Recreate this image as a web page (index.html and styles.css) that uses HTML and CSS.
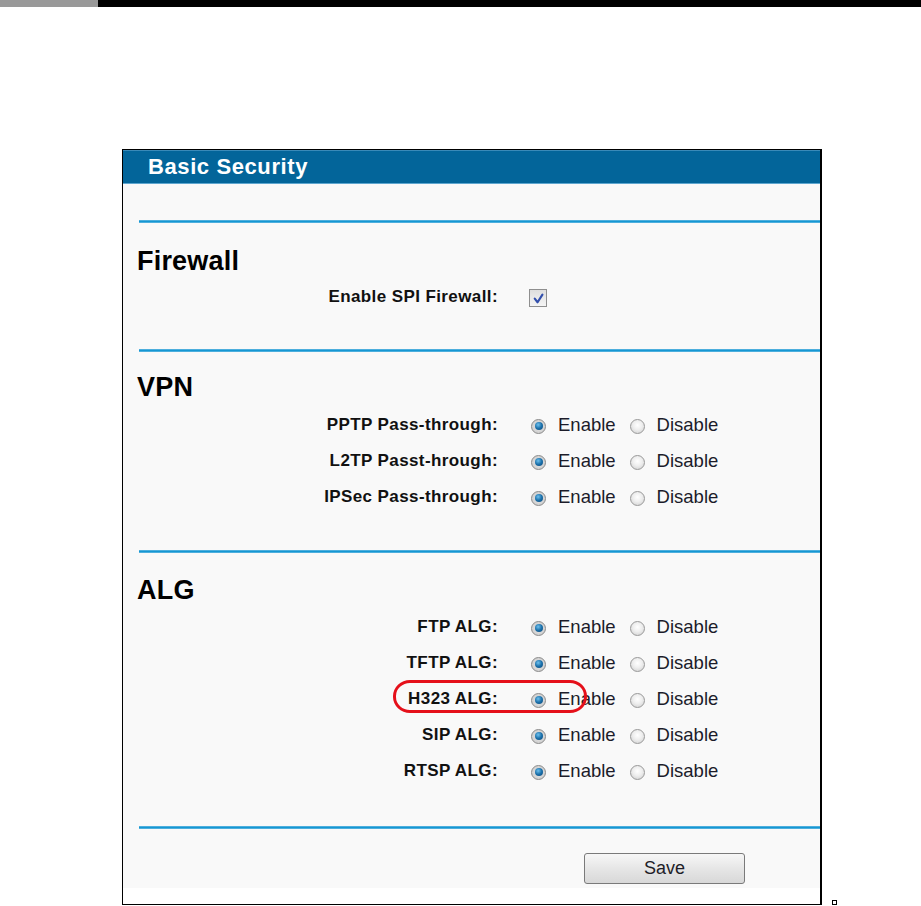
FILE: index.html
```html
<!DOCTYPE html>
<html lang="en">
<head>
<meta charset="utf-8">
<title>Basic Security</title>
<link rel="stylesheet" href="styles.css">
</head>
<body>
<div class="topbar"><span class="topbar-gray"></span><span class="topbar-black"></span></div>
<div class="stage">
  <div class="panel">
    <div class="panel-header">Basic Security</div>
    <div class="panel-body">
      <div class="divider"></div>
      <h2 class="section-title title-firewall">Firewall</h2>
      <div class="row row-first-fw">
        <span class="label">Enable SPI Firewall:</span>
        <span class="control"><span class="checkbox"><svg viewBox="0 0 16 16" width="16" height="16"><path d="M4 8.2 L7 12 L12.2 3.8" fill="none" stroke="#3350ac" stroke-width="2.3" stroke-linecap="round" stroke-linejoin="round"/></svg></span></span>
      </div>
      <div class="divider divider-fw"></div>

      <h2 class="section-title title-vpn">VPN</h2>
      <div class="row row-first-vpn">
        <span class="label">PPTP Pass-through:</span>
        <span class="control radios"><span class="radio on"></span><span class="opt">Enable</span><span class="radio"></span><span class="opt">Disable</span></span>
      </div>
      <div class="row">
        <span class="label">L2TP Passt-hrough:</span>
        <span class="control radios"><span class="radio on"></span><span class="opt">Enable</span><span class="radio"></span><span class="opt">Disable</span></span>
      </div>
      <div class="row">
        <span class="label">IPSec Pass-through:</span>
        <span class="control radios"><span class="radio on"></span><span class="opt">Enable</span><span class="radio"></span><span class="opt">Disable</span></span>
      </div>
      <div class="divider divider-vpn"></div>

      <h2 class="section-title title-alg">ALG</h2>
      <div class="row row-first-alg">
        <span class="label">FTP ALG:</span>
        <span class="control radios"><span class="radio on"></span><span class="opt">Enable</span><span class="radio"></span><span class="opt">Disable</span></span>
      </div>
      <div class="row">
        <span class="label">TFTP ALG:</span>
        <span class="control radios"><span class="radio on"></span><span class="opt">Enable</span><span class="radio"></span><span class="opt">Disable</span></span>
      </div>
      <div class="row">
        <span class="label">H323 ALG:</span>
        <span class="control radios"><span class="radio on"></span><span class="opt">Enable</span><span class="radio"></span><span class="opt">Disable</span></span>
        <span class="highlight"></span>
      </div>
      <div class="row">
        <span class="label">SIP ALG:</span>
        <span class="control radios"><span class="radio on"></span><span class="opt">Enable</span><span class="radio"></span><span class="opt">Disable</span></span>
      </div>
      <div class="row">
        <span class="label">RTSP ALG:</span>
        <span class="control radios"><span class="radio on"></span><span class="opt">Enable</span><span class="radio"></span><span class="opt">Disable</span></span>
      </div>
      <div class="divider divider-alg"></div>

      <div class="actions"><button class="save-btn" type="button">Save</button></div>
    </div>
    <div class="panel-foot"></div>
  </div>
  <span class="mark"></span>
</div>
</body>
</html>
```
FILE: styles.css
```css
html, body {
  margin: 0;
  padding: 0;
  background: #ffffff;
  font-family: "Liberation Sans", Arial, sans-serif;
}

.topbar {
  display: flex;
  height: 7px;
}
.topbar-gray { width: 98px; background: #999999; }
.topbar-black { flex: 1; background: #000000; }

.stage {
  display: flex;
  align-items: flex-end;
  padding-left: 122px;
  margin-top: 142px;
}

.panel {
  width: 697px;
  border: 1px solid #000000;
  border-right-width: 2px;
  background: #ffffff;
}

.panel-header {
  height: 32px;
  background: #03659a;
  border-top: 1px solid #3a8ab8;
  border-bottom: 1px solid #5ea6cf;
  color: #ffffff;
  font-weight: bold;
  font-size: 22px;
  letter-spacing: 0.6px;
  line-height: 32px;
  padding-left: 25px;
}

.panel-body {
  background: #f9f9f9;
  padding-top: 36px;
  padding-bottom: 4px;
}

.panel-foot {
  height: 16px;
  background: #ffffff;
}

.divider {
  margin-left: 16px;
  height: 3px;
  background: linear-gradient(#7fc4e6, #1697d3 35%, #1697d3 65%, #7fc4e6);
}
.divider-fw { margin-top: 34px; }
.divider-vpn { margin-top: 35px; }
.divider-alg { margin-top: 37px; }

.section-title {
  margin: 0 0 0 14px;
  font-size: 27px;
  font-weight: bold;
  line-height: 36px;
  color: #000000;
  letter-spacing: 0.2px;
}
.title-firewall { margin-top: 20px; }
.title-vpn { margin-top: 17px; }
.title-alg { margin-top: 19px; }

.row {
  display: grid;
  grid-template-columns: 375px auto;
  column-gap: 31px;
  align-items: center;
  height: 36px;
  position: relative;
}
.row-first-fw { margin-top: 0; }
.row-first-vpn { margin-top: 2px; }
.row-first-alg { margin-top: 1px; }

.label {
  text-align: right;
  font-weight: bold;
  font-size: 17px;
  letter-spacing: 0.4px;
  color: #111111;
  white-space: nowrap;
}

.control {
  display: flex;
  align-items: center;
}

.radios { padding-left: 2px; }

.opt {
  font-size: 18.5px;
  color: #1c1c2a;
  margin-left: 12px;
  margin-right: 14px;
}

.radio {
  width: 15px;
  height: 15px;
  border-radius: 50%;
  box-sizing: border-box;
  border: 1.5px solid #999999;
  background: radial-gradient(circle at 50% 40%, #ffffff 0%, #eeeeee 45%, #cccccc 100%);
  display: flex;
  align-items: center;
  justify-content: center;
  margin-top: 2px;
}
.radio.on {
  border-color: #8a8a8a;
  background: radial-gradient(circle, #e6e6e6 0%, #c8c8c8 100%);
}
.radio.on::after {
  content: "";
  width: 8px;
  height: 8px;
  border-radius: 50%;
  background: radial-gradient(circle at 40% 35%, #6cc0ee 0%, #1b70aa 50%, #0c4677 100%);
}

.checkbox {
  width: 18px;
  height: 18px;
  box-sizing: border-box;
  border: 1.5px solid #8f8f8f;
  background: linear-gradient(#dedede, #f5f5f5);
  display: flex;
  align-items: center;
  justify-content: center;
  margin-top: 2px;
}
.checkbox svg { display: block; width: 15px; height: 15px; }

.highlight {
  position: absolute;
  left: 270px;
  top: -1px;
  width: 194px;
  height: 33px;
  box-sizing: border-box;
  border: 3px solid #e5101a;
  border-radius: 17px / 16px;
}

.actions {
  padding-top: 24px;
  padding-left: 461px;
}

.save-btn {
  width: 161px;
  height: 31px;
  border: 1px solid #7a7a7a;
  border-radius: 3px;
  background: linear-gradient(#f7f7f7, #e6e6e6 50%, #d8d8d8);
  font-family: "Liberation Sans", Arial, sans-serif;
  font-size: 18px;
  color: #1e1e28;
  padding: 0;
  display: block;
}

.mark {
  width: 3px;
  height: 3px;
  border: 1px solid #000000;
  margin-left: 10px;
  margin-bottom: 0px;
}
```
